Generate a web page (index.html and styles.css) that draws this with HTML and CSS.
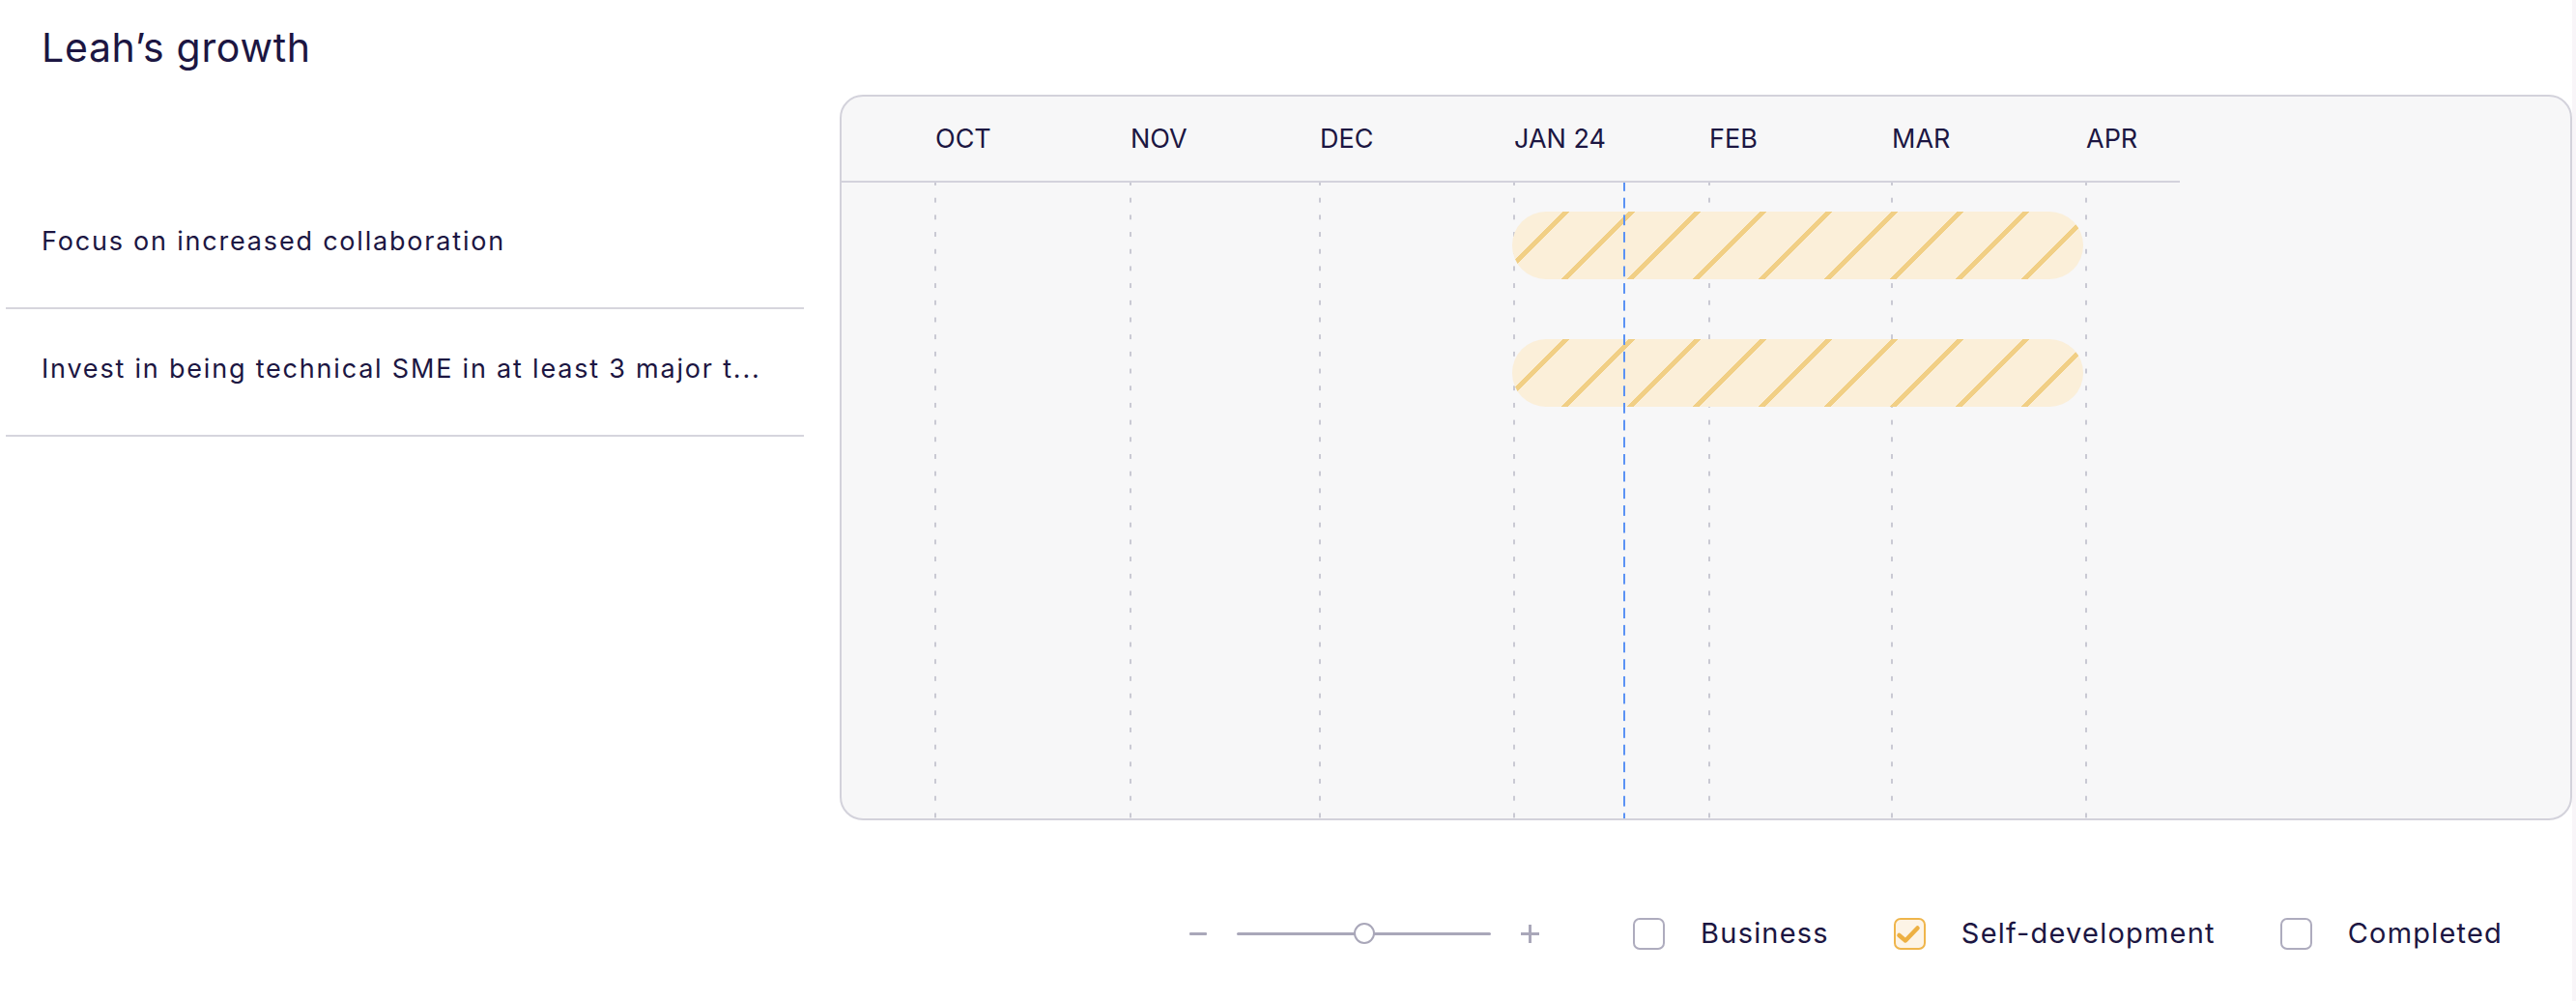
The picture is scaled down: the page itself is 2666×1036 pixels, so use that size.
FILE: index.html
```html
<!DOCTYPE html>
<html lang="en">
<head>
<meta charset="utf-8">
<title>Leah’s growth</title>
<link rel="stylesheet" href="styles.css">
</head>
<body>
<div class="page">
  <section class="left">
    <h1 class="title">Leah’s growth</h1>
    <ul class="goal-list">
      <li class="goal">Focus on increased collaboration</li>
      <li class="goal">Invest in being technical SME in at least 3 major t...</li>
    </ul>
  </section>

  <section class="main">
    <div class="chart">
      <div class="timeline">
        <div class="months">
          <div class="month"></div>
          <div class="month">OCT</div>
          <div class="month">NOV</div>
          <div class="month">DEC</div>
          <div class="month">JAN 24</div>
          <div class="month">FEB</div>
          <div class="month">MAR</div>
          <div class="month">APR</div>
        </div>
        <div class="chart-body">
          <div class="gridlines">
            <div class="gridcol"></div>
            <div class="gridcol line"></div>
            <div class="gridcol line"></div>
            <div class="gridcol line"></div>
            <div class="gridcol line"></div>
            <div class="gridcol line"></div>
            <div class="gridcol line"></div>
            <div class="gridcol line"></div>
          </div>
          <div class="rows">
            <div class="row"><div class="bar" style="margin-left:694px;width:591px"></div></div>
            <div class="row"><div class="bar" style="margin-left:694px;width:591px"></div></div>
          </div>
          <div class="today" style="left:809px"></div>
        </div>
      </div>
    </div>

    <div class="controls">
      <div class="zoom">
        <span class="zoom-minus"></span>
        <div class="zoom-track"><span class="zoom-thumb"></span></div>
        <span class="zoom-plus"></span>
      </div>
      <div class="filters">
        <label class="filter"><span class="checkbox"></span><span class="filter-label">Business</span></label>
        <label class="filter"><span class="checkbox checked"><svg viewBox="0 0 33 33" width="33" height="33"><path d="M5.5 18 L12 23.5 L24.5 10.5" fill="none" stroke="#edb043" stroke-width="4.5" stroke-linecap="round" stroke-linejoin="round"/></svg></span><span class="filter-label">Self-development</span></label>
        <label class="filter"><span class="checkbox"></span><span class="filter-label">Completed</span></label>
      </div>
    </div>
  </section>

  <div class="scroll-edge"></div>
</div>
</body>
</html>
```

FILE: styles.css
```css
* { box-sizing: border-box; }

html, body {
  margin: 0;
  padding: 0;
  background: #ffffff;
}

body {
  font-family: "Inter", "Lato", sans-serif;
  color: #1c1642;
}

.page {
  display: flex;
  width: 2666px;
  height: 1036px;
  overflow: hidden;
}

/* ---------- left column ---------- */
.left {
  width: 832px;
  flex: none;
  padding-left: 6px;
}

.title {
  margin: 0;
  height: 188px;
  padding: 21px 0 0 37px;
  font-size: 41px;
  font-weight: 400;
  line-height: 56px;
  letter-spacing: 0.7px;
}

.goal-list {
  list-style: none;
  margin: 0;
  padding: 0;
}

.goal {
  height: 132px;
  display: flex;
  align-items: center;
  padding: 0 0 6px 37px;
  border-bottom: 2px solid #d6d5dd;
  font-size: 27px;
  line-height: 36px;
  letter-spacing: 1.8px;
  white-space: nowrap;
}

/* ---------- main column ---------- */
.main {
  flex: 1;
  margin-left: 37px;
  padding-top: 98px;
  display: flex;
  flex-direction: column;
}

.chart {
  height: 751px;
  border: 2px solid #d3d2db;
  border-radius: 24px;
  background: #f7f7f8;
  overflow: hidden;
}

.timeline {
  width: 1385px;
  height: 100%;
  display: flex;
  flex-direction: column;
}

.months,
.gridlines {
  display: grid;
  grid-template-columns: 96px 202px 196px 201px 202px 189px 201px 98px;
}

.months {
  height: 89px;
  border-bottom: 2px solid #d3d2dc;
  align-items: center;
}

.month {
  font-size: 27px;
  line-height: 32px;
  color: #1c1642;
  padding-left: 1px;
  white-space: nowrap;
}

.chart-body {
  position: relative;
  flex: 1;
}

.gridlines {
  position: absolute;
  inset: 0;
}

.gridcol.line {
  background: linear-gradient(to bottom, #c9c9d3 0, #c9c9d3 4.5px, transparent 4.5px) 0 -2px / 2px 17.7px repeat-y;
}

.rows {
  position: relative;
}

.row {
  height: 132px;
  display: flex;
  align-items: center;
  padding-bottom: 2px;
}

.bar {
  height: 70px;
  flex: none;
  border-radius: 35px;
  background-color: #fbefd9;
  background-image: repeating-linear-gradient(135deg,
    transparent 0, transparent 37.3px,
    #f1cf85 37.3px, #f1cf85 41.9px,
    transparent 41.9px, transparent 48.08px);
}

.today {
  position: absolute;
  top: 0;
  bottom: 0;
  width: 2px;
  background: linear-gradient(to bottom, #5b92f4 0, #5b92f4 11px, transparent 11px) 0 -2px / 2px 17.7px repeat-y;
}

/* ---------- controls ---------- */
.controls {
  margin-top: 97px;
  height: 40px;
  display: flex;
  justify-content: flex-end;
  align-items: center;
  padding-right: 72px;
}

.zoom {
  display: flex;
  align-items: center;
  gap: 31px;
}

.zoom-minus {
  width: 18px;
  height: 3px;
  background: #a9a7b9;
  border-radius: 1px;
}

.zoom-track {
  position: relative;
  width: 263px;
  height: 3px;
  background: #a9a7b9;
  border-radius: 2px;
}

.zoom-thumb {
  position: absolute;
  left: 121px;
  top: -10px;
  width: 22px;
  height: 22px;
  border-radius: 50%;
  background: #ffffff;
  border: 2px solid #a9a7b9;
}

.zoom-plus {
  position: relative;
  width: 19px;
  height: 19px;
  background:
    linear-gradient(#a9a7b9, #a9a7b9) center / 19px 3px no-repeat,
    linear-gradient(#a9a7b9, #a9a7b9) center / 3px 19px no-repeat;
}

.filters {
  display: flex;
  align-items: center;
  gap: 67px;
  margin-left: 97px;
}

.filter {
  display: flex;
  align-items: center;
  gap: 37px;
}

.checkbox {
  width: 33px;
  height: 33px;
  flex: none;
  border: 2px solid #aeacbe;
  border-radius: 7px;
  background: #ffffff;
  display: flex;
  align-items: center;
  justify-content: center;
}

.checkbox.checked {
  border-color: #efb54b;
  background: #fdf4e6;
}

.checkbox svg {
  display: block;
  flex: none;
}

.filter-label {
  font-size: 29px;
  line-height: 36px;
  letter-spacing: 1.2px;
  color: #1c1642;
  white-space: nowrap;
}

.scroll-edge {
  width: 4px;
  flex: none;
  background: #f8f5f8;
}
```
